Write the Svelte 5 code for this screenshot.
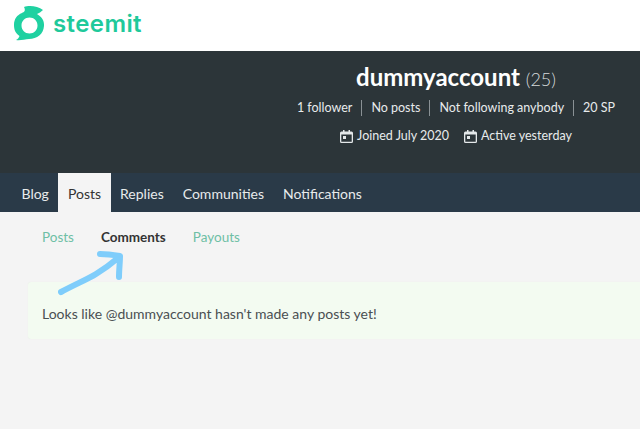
<script>
  const stats = ["1 follower", "No posts", "Not following anybody", "20 SP"];
  const dates = ["Joined July 2020", "Active yesterday"];
  const tabs = ["Blog", "Posts", "Replies", "Communities", "Notifications"];
  const subTabs = ["Posts", "Comments", "Payouts"];
</script>

<div class="page">
  <header class="topbar">
    <svg class="logo" width="34" height="36" viewBox="0 0 34 36">
      <path fill="#1fd1a1" fill-rule="evenodd" d="M13 2 C18 0 27 1 32 5 C30 7 28 8 26 9 C31 12 33.500 16 33 21 C32.500 29 26 34 18 34 C14 34 9 36 5 35 C7 34 8 32.500 8.500 31 C4 28 3 24 3 20 C3 14 6 10 11 8 C13 7 15 6 13 2 Z M18.500 12.500 C14 12.500 10.500 16 10.500 20.500 C10.500 25 14 28.500 18.500 28.500 C23 28.500 26.500 25 26.500 20.500 C26.500 16 23 12.500 18.500 12.500 Z"/>
    </svg>
    <span class="wordmark">steemit</span>
  </header>

  <section class="banner">
    <h1>dummyaccount <span class="rep">(25)</span></h1>
    <div class="stats">
      {#each stats as stat}
        <span>{stat}</span>
      {/each}
    </div>
    <div class="dates">
      {#each dates as date}
        <span class="date">
          <svg width="13" height="13" viewBox="0 0 13 13">
            <path fill="#e4e8ea" fill-rule="evenodd" d="M3 0h1.500v1.500h4V0H10v1.500h1.500A1.500 1.500 0 0 1 13 3v8.500a1.500 1.500 0 0 1-1.500 1.500h-10A1.500 1.500 0 0 1 0 11.500V3a1.500 1.500 0 0 1 1.500-1.500H3z M1.300 4.500v7.200h10.400V4.500z"/>
            <rect x="3" y="6" width="3" height="3" fill="#e4e8ea"/>
          </svg>
          {date}
        </span>
      {/each}
    </div>
  </section>

  <nav class="tabs">
    {#each tabs as tab}
      <span class="tab" class:active={tab === "Posts"}>{tab}</span>
    {/each}
  </nav>

  <main class="content">
    <div class="subtabs">
      {#each subTabs as sub}
        <span class:current={sub === "Comments"}>{sub}</span>
      {/each}
    </div>
    <div class="notice">Looks like @dummyaccount hasn't made any posts yet!</div>
    <svg class="arrow" width="76" height="48" viewBox="0 0 76 48">
      <path fill="none" stroke="#7fcdfb" stroke-width="6" stroke-linecap="round" stroke-linejoin="round" d="M3 43 C18 35 30 30 38 25 C46 20 53 15 60 9 M42 5 C48 5 56 6 62 7 C62 13 61 21 61 28"/>
    </svg>
  </main>
</div>

<style>
  :global(body) {
    margin: 0;
    background: #f4f4f4;
  }

  .page {
    width: 640px;
    height: 429px;
    overflow: hidden;
    font-family: Lato, "Noto Sans", sans-serif;
    background: #f4f4f4;
  }

  .topbar {
    height: 51px;
    background: #fff;
    display: flex;
    align-items: center;
    box-sizing: border-box;
    padding: 0 0 5px 11px;
    gap: 8px;
  }

  .wordmark {
    font-family: Inter, sans-serif;
    font-size: 24px;
    font-weight: 600;
    color: #1fc99b;
    letter-spacing: 0.4px;
  }

  .banner {
    height: 122px;
    background: #2c3539;
    color: #e8ebec;
    box-sizing: border-box;
    padding-top: 11px;
    text-align: center;
    padding-left: 272px;
  }

  h1 {
    margin: 0;
    font-size: 24px;
    line-height: 30px;
    font-weight: 700;
    color: #fff;
  }

  .rep {
    font-size: 18px;
    font-weight: 300;
    color: #d6dadc;
  }

  .stats {
    display: flex;
    justify-content: center;
    margin-top: 6px;
    font-size: 12.500px;
    line-height: 16px;
  }

  .stats span {
    padding: 0 9px;
    border-right: 1px solid #8a9195;
  }

  .stats span:last-child {
    border-right: none;
  }

  .dates {
    display: flex;
    justify-content: center;
    gap: 15px;
    margin-top: 12px;
    font-size: 12.500px;
    line-height: 16px;
  }

  .date {
    display: flex;
    align-items: center;
    gap: 4px;
  }

  .tabs {
    height: 39px;
    background: #2a3a48;
    display: flex;
    padding-left: 12px;
    font-size: 14px;
    color: #e8ebec;
  }

  .tab {
    padding: 0 9.500px;
    line-height: 41px;
  }

  .active {
    background: #f4f4f4;
    color: #333;
    margin-bottom: 0;
  }

  .content {
    position: relative;
    padding: 16px 0 0 28px;
  }

  .subtabs {
    display: flex;
    gap: 27px;
    padding-left: 14px;
    font-size: 13.500px;
    line-height: 18px;
    color: #6ebfa5;
  }

  .current {
    color: #333;
    font-weight: 700;
  }

  .notice {
    margin-top: 36px;
    height: 57px;
    box-sizing: border-box;
    padding-left: 14px;
    line-height: 63px;
    font-size: 14px;
    color: #4a4f52;
    background: #f3fbf1;
    border-radius: 3px 0 0 3px;
    box-shadow: 0 0 1px #e3e8e0;
  }

  .arrow {
    position: absolute;
    left: 58px;
    top: 37px;
  }
</style>
